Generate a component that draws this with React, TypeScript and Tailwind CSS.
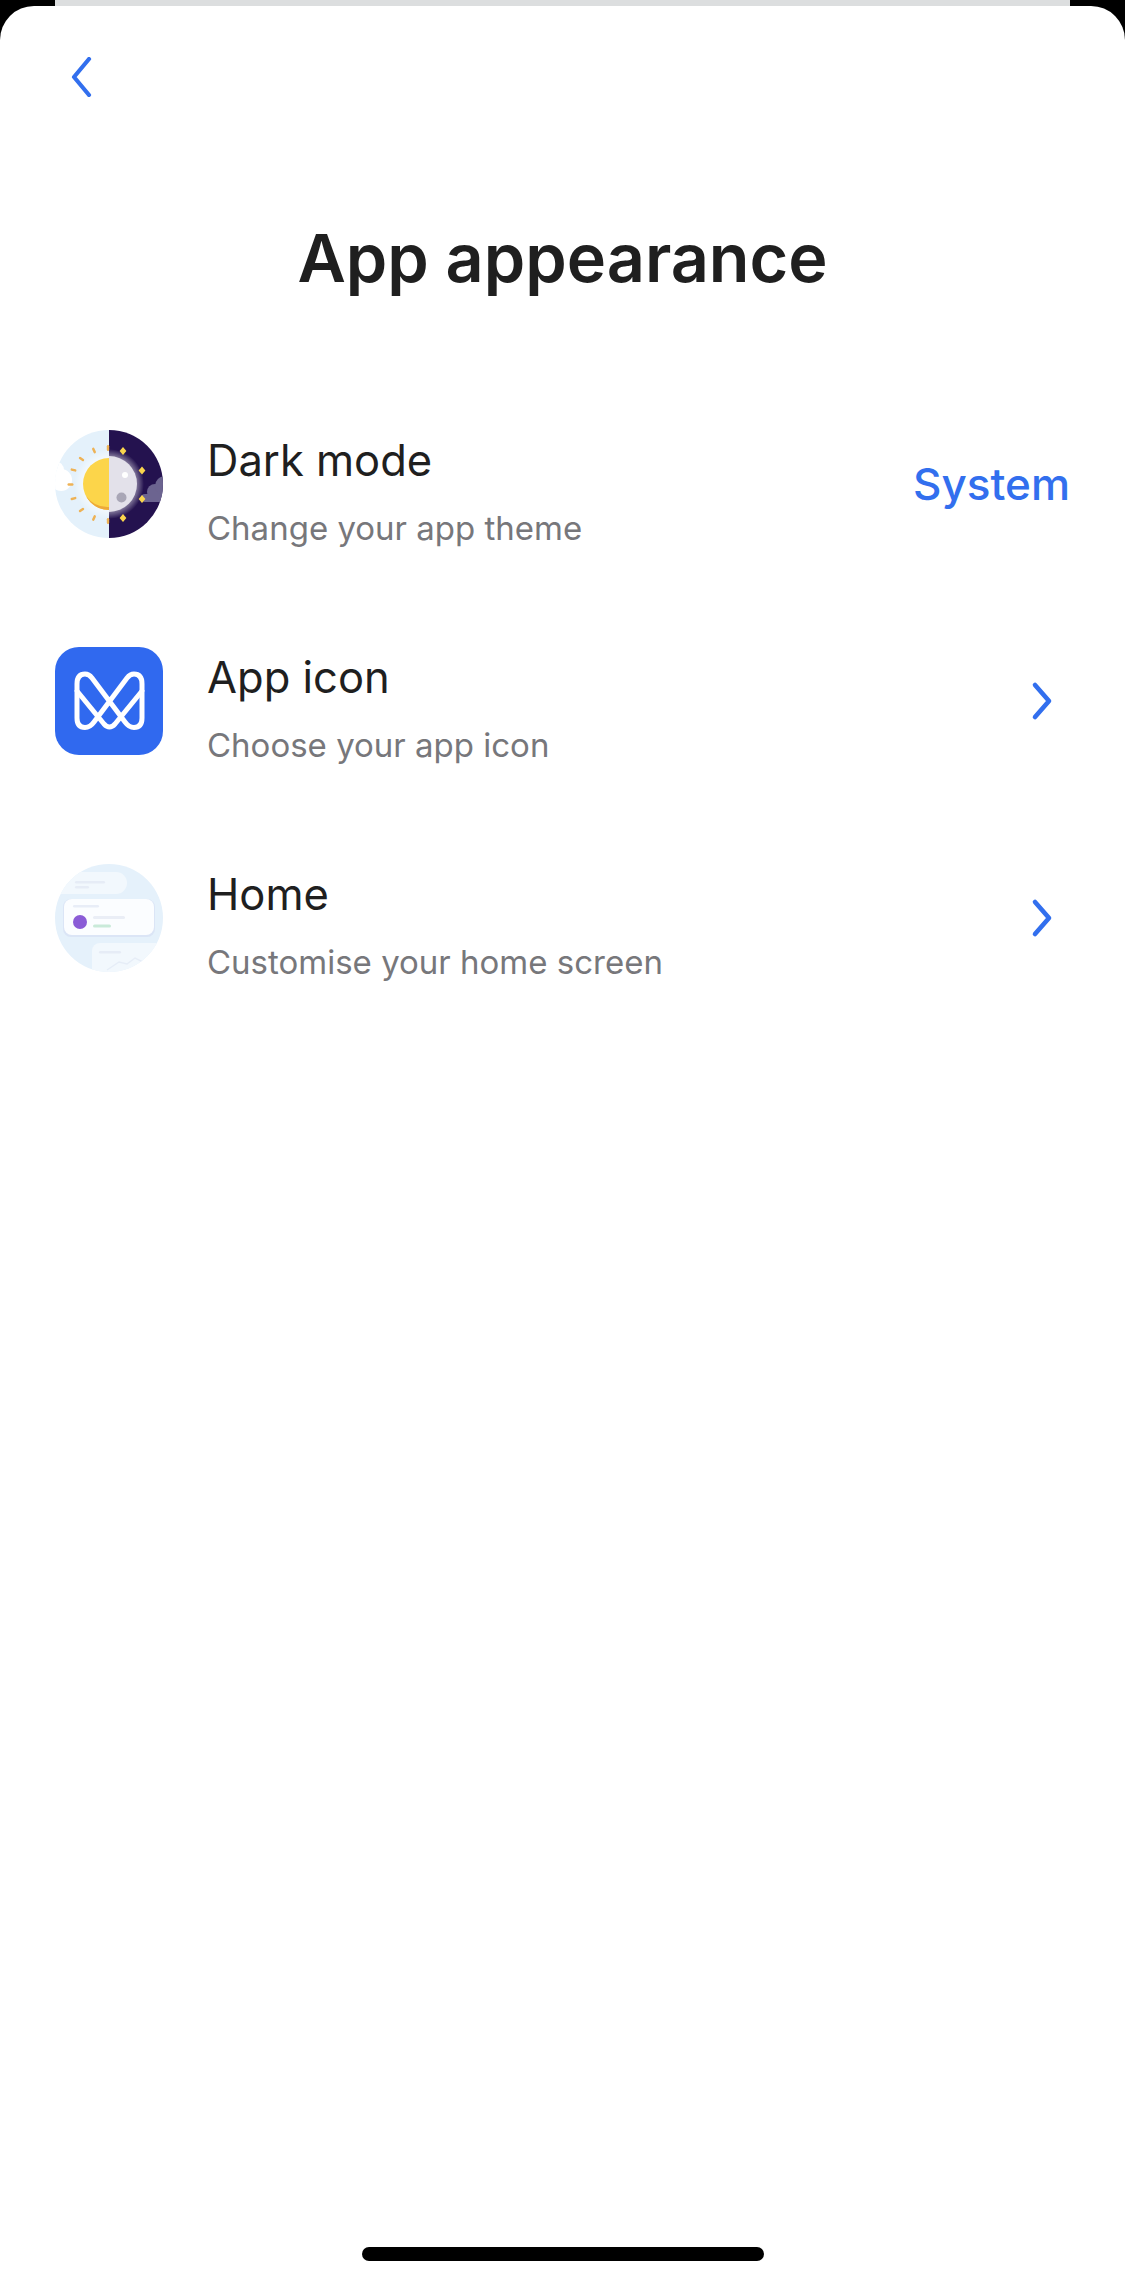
import React from 'react';

const FONT = "font-['Inter','Noto_Sans',sans-serif]";

const BackChevron = () => (
  <svg width="22" height="40" viewBox="0 0 22 40" fill="none" className="block">
    <path d="M19 2 L4 20 L19 38" stroke="#326fee" strokeWidth="4.2" strokeLinecap="round" strokeLinejoin="round" />
  </svg>
);

const RowChevron = () => (
  <svg width="25" height="42" viewBox="0 0 25 42" fill="none" className="block">
    <path d="M5 5 L19 21 L5 37" stroke="#326fee" strokeWidth="4.6" strokeLinecap="round" strokeLinejoin="round" />
  </svg>
);

// half sun, half moon
const ThemeIcon = () => {
  const rays = [
    [15.5, 54.5, 0],
    [18.5, 40, 15],
    [26.5, 29, 35],
    [39, 20.5, 65],
    [53, 18, 90],
    [18.5, 68.5, -15],
    [26.5, 80, -35],
    [39, 88, -65],
    [53, 91, -90],
  ];
  const stars = [
    [68, 21],
    [87, 40.5],
    [87, 69],
    [68, 88],
  ];
  return (
    <svg width="108" height="108" viewBox="0 0 108 108">
      <defs>
        <clipPath id="theme-circle">
          <circle cx="54" cy="54" r="54" />
        </clipPath>
        <radialGradient id="moon-glow">
          <stop offset="0.75" stopColor="#ffffff" stopOpacity="0.5" />
          <stop offset="1" stopColor="#ffffff" stopOpacity="0" />
        </radialGradient>
      </defs>
      <g clipPath="url(#theme-circle)">
        <rect x="0" y="0" width="54" height="108" fill="#e4f1fb" />
        <rect x="54" y="0" width="54" height="108" fill="#24124f" />
        <circle cx="6" cy="50" r="11" fill="#ffffff" />
        <circle cx="0" cy="40" r="9" fill="#ffffff" />
        <circle cx="54" cy="54" r="35" fill="url(#moon-glow)" />
        <path d="M54 26 A28 28 0 0 1 54 82 Z" fill="#e3e1ea" />
        <path d="M54 28 A26 26 0 0 0 54 80 Z" fill="#fcd54a" />
        <path d="M54 80 A26 26 0 0 1 31 66 A27 27 0 0 0 54 77 Z" fill="#eda93a" />
        <circle cx="66.5" cy="67.5" r="5" fill="#a9a6b6" />
        <circle cx="70" cy="45" r="3" fill="#ffffff" />
        <circle cx="100" cy="62" r="8" fill="#6c6490" />
        <circle cx="110" cy="56" r="10" fill="#6c6490" />
        <rect x="86" y="64" width="24" height="8" rx="4" fill="#6c6490" />
        {rays.map(([x, y, r]) => (
          <rect
            key={`${x}-${y}`}
            x={x - 3}
            y={y - 1.2}
            width="6"
            height="2.4"
            rx="1.2"
            fill="#eeb255"
            transform={`rotate(${r} ${x} ${y})`}
          />
        ))}
        {stars.map(([x, y]) => (
          <path
            key={`${x}-${y}`}
            d={`M${x} ${y - 4} L${x + 3.4} ${y} L${x} ${y + 4} L${x - 3.4} ${y} Z`}
            fill="#fad54d"
          />
        ))}
      </g>
    </svg>
  );
};

const LogoIcon = () => (
  <svg width="108" height="108" viewBox="0 0 108 108" fill="none">
    <rect width="108" height="108" rx="24" fill="#3069ef" />
    <g stroke="#ffffff" strokeWidth="5" strokeLinejoin="round" strokeLinecap="round">
      <path d="M22 37 Q22 27 30 27 Q34 27 37 31 L70 75 Q74 80.5 79 80.5 Q87 80.5 87 71 V37 Q87 27 79 27 Q75 27 72 31 L39 75 Q35 80.5 30 80.5 Q22 80.5 22 71 Z" />
      <path d="M22 44 L49 77 Q54.5 83 60 77 L87 44" />
    </g>
  </svg>
);

const HomeIcon = () => (
  <svg width="108" height="108" viewBox="0 0 108 108">
    <defs>
      <clipPath id="home-circle">
        <circle cx="54" cy="54" r="54" />
      </clipPath>
    </defs>
    <g clipPath="url(#home-circle)">
      <rect width="108" height="108" fill="#e5f1fb" />
      <rect x="-10" y="8" width="82" height="22" rx="11" fill="#f2f8fd" />
      <rect x="20" y="17" width="30" height="2.5" rx="1.2" fill="#e6ecf6" />
      <rect x="20" y="22" width="14" height="2.5" rx="1.2" fill="#e6ecf6" />
      <rect x="8" y="35" width="92" height="38" rx="8" fill="#dbe5f6" />
      <rect x="9" y="35" width="90" height="36" rx="8" fill="#fbfdff" />
      <rect x="18" y="41" width="26" height="2.5" rx="1.2" fill="#e8edf7" />
      <circle cx="25" cy="58" r="7" fill="#8a5cd6" />
      <rect x="38" y="52" width="32" height="3" rx="1.5" fill="#eaeef6" />
      <rect x="38" y="60.5" width="18" height="3" rx="1.5" fill="#c9ead9" />
      <rect x="37" y="79" width="80" height="40" rx="8" fill="#f2f8fd" />
      <rect x="44" y="87" width="22" height="2.5" rx="1.2" fill="#e6ecf6" />
      <path d="M52 106 L64 98 L72 100 L80 94 L92 100" fill="none" stroke="#e6edf7" strokeWidth="1.4" />
    </g>
  </svg>
);

type RowProps = {
  icon: React.ReactNode;
  title: string;
  subtitle: string;
  trailing: React.ReactNode;
};

const Row = ({ icon, title, subtitle, trailing }: RowProps) => (
  <div className="flex h-[108px] items-center">
    <div className="w-[108px] shrink-0">{icon}</div>
    <div className="ml-[44px] flex flex-1 flex-col pt-[14px]">
      <span className="text-[43.5px] leading-[50px] text-[#1f1f1f]">{title}</span>
      <span className="mt-[24px] text-[33px] leading-[38px] text-[#77777b]">{subtitle}</span>
    </div>
    {trailing}
  </div>
);

const Chevron = () => (
  <div className="mr-[15px]">
    <RowChevron />
  </div>
);

export default function App() {
  return (
    <div className={`flex h-[2283px] flex-col bg-black ${FONT}`}>
      <div className="mx-[55px] h-[6px] shrink-0 bg-[#dcdedf]" />
      <div className="flex flex-1 flex-col rounded-t-[34px] bg-white px-[55px]">
        <div className="mt-[51px] ml-[15px]">
          <BackChevron />
        </div>
        <h1 className="mt-[123px] text-center text-[66.5px] leading-[76px] font-semibold text-[#1f1f1f]">
          App appearance
        </h1>
        <div className="mt-[134px] flex flex-col gap-[109px]">
          <Row
            icon={<ThemeIcon />}
            title="Dark mode"
            subtitle="Change your app theme"
            trailing={<span className="text-[44px] font-medium text-[#326fee]">System</span>}
          />
          <Row icon={<LogoIcon />} title="App icon" subtitle="Choose your app icon" trailing={<Chevron />} />
          <Row icon={<HomeIcon />} title="Home" subtitle="Customise your home screen" trailing={<Chevron />} />
        </div>
        <div className="mt-auto mb-[22px] h-[14px] w-[402px] self-center rounded-full bg-black" />
      </div>
    </div>
  );
}
